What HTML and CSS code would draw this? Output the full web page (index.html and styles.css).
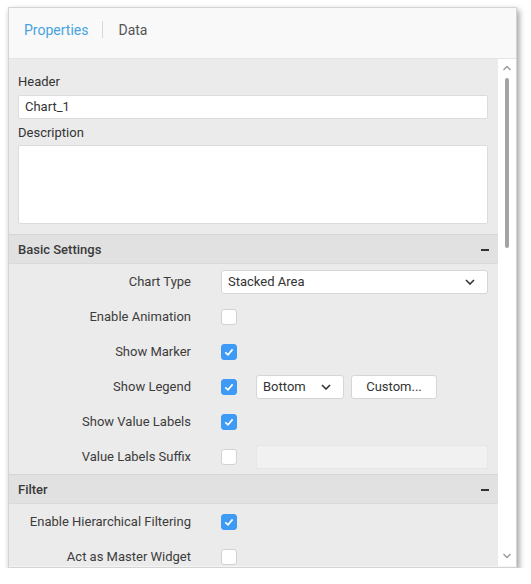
FILE: index.html
```html
<!DOCTYPE html>
<html>
<head>
<meta charset="utf-8">
<link rel="stylesheet" href="styles.css">
</head>
<body>
<div class="panel">
  <div class="tabs">
    <span class="tab active">Properties</span>
    <span class="tab-sep"></span>
    <span class="tab">Data</span>
  </div>
  <div class="body">
    <div class="content">
      <div class="field">
        <div class="flabel first">Header</div>
        <div class="input">Chart_1</div>
        <div class="flabel second">Description</div>
        <div class="textarea"></div>
      </div>

      <div class="section">
        <span>Basic Settings</span>
        <span class="minus"></span>
      </div>
      <div class="row">
        <div class="rlabel">Chart Type</div>
        <div class="select wide">
          <span>Stacked Area</span>
          <svg class="chev" width="10" height="6" viewBox="0 0 10 6"><path d="M1 1 L5 5 L9 1" fill="none" stroke="#333" stroke-width="1.6"/></svg>
        </div>
      </div>
      <div class="row">
        <div class="rlabel">Enable Animation</div>
        <span class="cb"></span>
      </div>
      <div class="row">
        <div class="rlabel">Show Marker</div>
        <span class="cb on"><svg width="16" height="16" viewBox="0 0 16 16"><path d="M4.3 8.3 L7 10.8 L11.6 5.4" fill="none" stroke="#fff" stroke-width="1.7"/></svg></span>
      </div>
      <div class="row">
        <div class="rlabel">Show Legend</div>
        <span class="cb on"><svg width="16" height="16" viewBox="0 0 16 16"><path d="M4.3 8.3 L7 10.8 L11.6 5.4" fill="none" stroke="#fff" stroke-width="1.7"/></svg></span>
        <div class="select small">
          <span>Bottom</span>
          <svg class="chev" width="10" height="6" viewBox="0 0 10 6"><path d="M1 1 L5 5 L9 1" fill="none" stroke="#333" stroke-width="1.6"/></svg>
        </div>
        <div class="button">Custom...</div>
      </div>
      <div class="row">
        <div class="rlabel">Show Value Labels</div>
        <span class="cb on"><svg width="16" height="16" viewBox="0 0 16 16"><path d="M4.3 8.3 L7 10.8 L11.6 5.4" fill="none" stroke="#fff" stroke-width="1.7"/></svg></span>
      </div>
      <div class="row">
        <div class="rlabel">Value Labels Suffix</div>
        <span class="cb"></span>
        <div class="disabled-input"></div>
      </div>

      <div class="section">
        <span>Filter</span>
        <span class="minus"></span>
      </div>
      <div class="row">
        <div class="rlabel">Enable Hierarchical Filtering</div>
        <span class="cb on"><svg width="16" height="16" viewBox="0 0 16 16"><path d="M4.3 8.3 L7 10.8 L11.6 5.4" fill="none" stroke="#fff" stroke-width="1.7"/></svg></span>
      </div>
      <div class="row">
        <div class="rlabel">Act as Master Widget</div>
        <span class="cb"></span>
      </div>
    </div>
    <div class="scrollbar">
      <svg class="arrow" width="10" height="6" viewBox="0 0 10 6"><path d="M1.5 5 L5 1.5 L8.5 5" fill="none" stroke="#9a9a9a" stroke-width="1.4"/></svg>
      <div class="track"><div class="thumb"></div></div>
      <svg class="arrow" width="10" height="6" viewBox="0 0 10 6"><path d="M1.5 1 L5 4.5 L8.5 1" fill="none" stroke="#9a9a9a" stroke-width="1.4"/></svg>
    </div>
  </div>
</div>
</body>
</html>
```

FILE: styles.css
```css
* { box-sizing: border-box; }
html, body { margin: 0; padding: 0; background: #ffffff; }
body {
  font-family: Roboto, "Liberation Sans", Arial, sans-serif;
  font-size: 13px;
  color: #333333;
}
.panel {
  margin: 7px 0 0 8px;
  width: 509px;
  height: 561px;
  border: 1px solid #d4d4d4;
  background: #ebebeb;
  box-shadow: 2px 3px 6px rgba(0, 0, 0, 0.4);
  display: flex;
  flex-direction: column;
  overflow: hidden;
}
.tabs {
  height: 51px;
  flex: none;
  background: #f9f9f9;
  border-bottom: 1px solid #e4e4e4;
  display: flex;
  align-items: flex-start;
  padding: 13px 0 0 15px;
}
.tab {
  font-size: 14px;
  line-height: 18px;
  color: #555555;
}
.tab.active { color: #46a3e0; }
.tab-sep {
  width: 1px;
  height: 17px;
  margin: 0 15px 0 14px;
  background: #d8d8d8;
}
.body {
  flex: 1;
  display: flex;
  min-height: 0;
  border-bottom: 1px solid #f4f4f4;
}
.content {
  flex: 1;
  overflow: hidden;
}
.field { padding: 15px 10px 10px 9px; }
.flabel { line-height: 16px; color: #333; }
.flabel.first { margin-bottom: 5px; }
.flabel.second { margin-top: 6px; margin-bottom: 4px; }
.input {
  height: 24px;
  background: #fff;
  border: 1px solid #dcdcdc;
  border-radius: 2px;
  padding: 0 6px;
  line-height: 22px;
  color: #333;
}
.textarea {
  height: 79px;
  background: #fff;
  border: 1px solid #dcdcdc;
  border-radius: 2px;
}
.section {
  height: 30px;
  background: #e1e1e1;
  border-top: 1px solid #d6d6d6;
  border-bottom: 1px solid #dadada;
  display: flex;
  align-items: center;
  justify-content: space-between;
  padding: 0 9px 0 9px;
  font-weight: 500;
  color: #3a3a3a;
}
.minus {
  width: 8px;
  height: 2px;
  background: #333;
  margin-top: 1px;
}
.row {
  height: 35px;
  display: flex;
  align-items: center;
}
.rlabel {
  width: 182px;
  text-align: right;
  margin-right: 30px;
  color: #3c3c3c;
  white-space: nowrap;
}
.select {
  height: 24px;
  background: #fff;
  border: 1px solid #d6d6d6;
  border-radius: 3px;
  display: flex;
  align-items: center;
  justify-content: space-between;
  padding: 0 12px 0 6px;
  color: #333;
}
.select.wide { width: 267px; }
.select.small { width: 88px; margin-left: 19px; }
.chev { display: block; }
.button {
  width: 86px;
  height: 24px;
  margin-left: 7px;
  background: #fff;
  border: 1px solid #d6d6d6;
  border-radius: 3px;
  text-align: center;
  line-height: 22px;
  color: #333;
}
.cb {
  width: 16px;
  height: 16px;
  border-radius: 3px;
  background: #fff;
  border: 1px solid #d2d2d2;
  display: block;
  flex: none;
}
.cb.on {
  background: #3d9bf6;
  border-color: #3d9bf6;
}
.cb svg { display: block; margin: -1px; }
.disabled-input {
  width: 232px;
  height: 24px;
  margin-left: 19px;
  background: #f1f1f1;
  border: 1px solid #e6e6e6;
  border-radius: 2px;
}
.scrollbar {
  width: 18px;
  flex: none;
  background: #fff;
  display: flex;
  flex-direction: column;
  align-items: center;
  padding: 6px 0 7px 0;
}
.arrow { display: block; flex: none; }
.track {
  flex: 1;
  width: 100%;
  display: flex;
  justify-content: center;
  padding-top: 7px;
}
.thumb {
  width: 4px;
  height: 170px;
  border-radius: 2px;
  background: #a3a3a3;
}
```
